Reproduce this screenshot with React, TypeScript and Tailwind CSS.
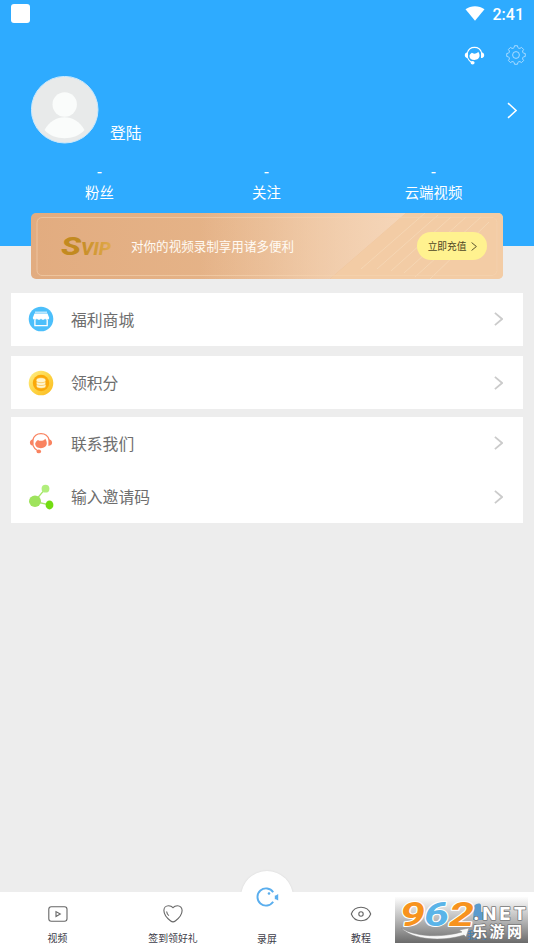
import { ReactNode } from "react";
import clsx from "clsx";

const STATS = ["粉丝", "关注", "云端视频"];

function Chevron({ className }: { className?: string }) {
  return (
    <svg
      viewBox="0 0 10 16"
      preserveAspectRatio="none"
      fill="none"
      stroke="currentColor"
      strokeWidth="2"
      className={className}
    >
      <path d="M1 1l8 7-8 7" />
    </svg>
  );
}

function HeadsetIcon({ className }: { className?: string }) {
  return (
    <svg viewBox="0 0 24 22" preserveAspectRatio="none" fill="none" className={className}>
      <path
        d="M3.800 8C5 3.800 8 1.600 12 1.600S19 3.800 20.200 8"
        stroke="currentColor"
        strokeWidth="1.200"
      />
      <path
        d="M4.600 7.200v6.800C2.400 13.900.9 12.700.9 10.600s1.500-3.300 3.700-3.400ZM19.400 7.200v6.800c2.200-.1 3.700-1.300 3.700-3.400s-1.500-3.300-3.700-3.400Z"
        fill="currentColor"
      />
      <path
        d="M6.200 11.600c.2-1.500 1.200-2.600 2.800-3.700 1.300 1.200 3.500 1.200 5.700.3.700-.3 1.200-.8 1.500-1.400.8.900 1.500 2.500 1.600 4.300 0 3.200-2.500 5.100-5.900 5.100s-5.700-1.600-5.700-4.600Z"
        fill="currentColor"
      />
      <path d="M4 13.500c.9 2.400 2.500 4.300 5 5.500" stroke="currentColor" strokeWidth="1.200" />
      <ellipse cx="9.800" cy="19.400" rx="2.300" ry="1.900" fill="currentColor" />
    </svg>
  );
}

function GearIcon({ className }: { className?: string }) {
  const teeth = Array.from({ length: 8 }, (_, i) => {
    const point = (r: number, deg: number) => {
      const a = ((i * 45 + deg - 90) * Math.PI) / 180;
      return `${(10 + r * Math.cos(a)).toFixed(2)} ${(10 + r * Math.sin(a)).toFixed(2)}`;
    };
    return `${point(7.7, -14)} L${point(9.4, -9)} L${point(9.4, 9)} L${point(7.7, 14)} L${point(7.3, 22.5)}`;
  });

  return (
    <svg
      viewBox="0 0 20 20"
      fill="none"
      stroke="currentColor"
      strokeWidth="0.9"
      strokeLinejoin="round"
      className={className}
    >
      <path d={`M${teeth.join(" L")} Z`} />
      <circle cx="10" cy="10" r="3.4" />
    </svg>
  );
}

function ShopIcon() {
  return (
    <svg viewBox="0 0 26 26" className="size-[26px]">
      <circle cx="13" cy="13" r="12.300" fill="#4cbffb" />
      <path d="M7 5.600h12v1.200H7z" fill="#d9f2ff" />
      <path
        d="M6.500 7.500h13l1.700 4.200c0 1.300-.9 2-2 2s-1.900-.6-2.100-1.300c-.3.800-1.100 1.300-2.100 1.300s-1.700-.5-2-1.300c-.3.800-1 1.300-2 1.300s-1.800-.5-2.100-1.300c-.2.700-1 1.300-2.100 1.300s-2-.7-2-2Z"
        fill="#fff"
      />
      <path d="M6.900 14v5.700h12.300V14" fill="none" stroke="#fff" strokeWidth="1.300" />
    </svg>
  );
}

function CoinIcon() {
  return (
    <svg viewBox="0 0 26 26" className="size-[26px]">
      <defs>
        <linearGradient id="coin" x1="0" y1="0" x2="1" y2="1">
          <stop offset="0" stopColor="#fff08a" />
          <stop offset="0.5" stopColor="#fdd545" />
          <stop offset="1" stopColor="#fcb91e" />
        </linearGradient>
      </defs>
      <circle cx="13" cy="13" r="12.300" fill="url(#coin)" />
      <circle cx="13" cy="13" r="8.200" fill="#fba808" />
      <g fill="#fff5cf" stroke="#f9b52c" strokeWidth="0.600">
        <ellipse cx="13.200" cy="15.800" rx="4.800" ry="2.500" />
        <ellipse cx="13" cy="13" rx="4.800" ry="2.500" />
        <ellipse cx="13" cy="10.200" rx="4.800" ry="2.500" />
      </g>
    </svg>
  );
}

function ShareIcon() {
  return (
    <svg viewBox="0 0 26 26" className="size-[26px]">
      <path d="M6.500 17.500l10.800-12.700M6.500 17.500l14.800 3.300" stroke="#a5e669" strokeWidth="1.300" />
      <ellipse cx="7" cy="17.300" rx="6" ry="5.700" fill="#9ee35c" />
      <circle cx="17.500" cy="4.700" r="3.900" fill="#b1ee7c" />
      <ellipse cx="21.500" cy="20.900" rx="3.900" ry="4.500" fill="#73dc12" />
    </svg>
  );
}

function MenuRow({ icon, label }: { icon: ReactNode; label: string }) {
  return (
    <div className="flex h-[53.300px] items-center pr-[20px] pl-[17px]">
      <span className="flex w-[26px] justify-center">{icon}</span>
      <span className="mt-px ml-[17px] flex-1 text-[15.800px] text-[#6e6e6e]">{label}</span>
      <Chevron className="h-[14px] w-[9px] text-[#cbcbcb]" />
    </div>
  );
}

function StatusBar() {
  return (
    <div className="flex h-7 items-center justify-between pr-[10px] pl-[10.500px]">
      <span className="mb-[1px] size-[19.500px] rounded-[3px] bg-white" />
      <div className="flex items-center gap-[8px]">
        <svg viewBox="0 0 20 16" className="mb-[2px] h-[16px] w-5" fill="#fff">
          <path d="M.5 4.200C6 .2 14 .2 19.500 4.200L10 15.700Z" />
        </svg>
        <span className="mt-[2px] font-[Roboto] text-[16px] font-medium text-white">2:41</span>
      </div>
    </div>
  );
}

function VipBanner() {
  return (
    <div className="relative z-10 mx-[31px] -mt-[33px] flex h-[66px] items-center overflow-hidden rounded-[5px] bg-linear-to-r from-[#e2ac80] via-[#e6b58a] to-[#f3ceab] pr-4 pl-[30px]">
      <svg viewBox="0 0 472 66" className="absolute inset-0 h-full w-full" fill="none">
        <defs>
          <linearGradient id="sheen" x1="0" y1="0" x2="1" y2="0">
            <stop offset="0.45" stopColor="#f5d5b8" stopOpacity="0" />
            <stop offset="1" stopColor="#f5d6b9" />
          </linearGradient>
        </defs>
        <path d="M0 0H375L299 66H0Z" fill="url(#sheen)" />
        <path d="M375 0H472V66H299Z" fill="#f3cca5" />
        <path
          d="M330 56L394 0M346 56L407 2M360 58L420 4M373 60L435 4M384 64L450 4M399 66L458 9"
          stroke="#f8dec0"
          strokeWidth="0.800"
          opacity="0.700"
        />
        <rect x="6" y="4.500" width="460" height="58" rx="5" stroke="#f5d3b1" strokeOpacity="0.600" />
      </svg>
      <svg viewBox="0 0 52 22" className="relative h-[22px] w-[52px] overflow-visible">
        <defs>
          <linearGradient id="gold" x1="0" y1="0" x2="1" y2="0">
            <stop offset="0" stopColor="#c58c26" />
            <stop offset="1" stopColor="#e2ab4c" />
          </linearGradient>
        </defs>
        <g fontFamily="Roboto, 'Liberation Sans', sans-serif" fontWeight="800" fontStyle="italic">
          <text x="0" y="20" fontSize="26.500" textLength="20" lengthAdjust="spacingAndGlyphs" fill="#c28a20">
            S
          </text>
          <text x="20" y="20" fontSize="18" textLength="30" lengthAdjust="spacingAndGlyphs" fill="url(#gold)">
            VIP
          </text>
        </g>
      </svg>
      <p className="relative ml-[18px] flex-1 text-[12.550px] whitespace-nowrap text-[#fffaf3]">
        对你的视频录制享用诸多便利
      </p>
      <button className="relative flex h-[28px] w-[70px] items-center justify-center gap-[5px] rounded-full bg-[#fff28f] pl-px text-[9.700px] text-[#4e4726]">
        立即充值
        <Chevron className="h-[9px] w-[6px] stroke-[1.600]" />
      </button>
    </div>
  );
}

function Tab({
  label,
  width,
  children,
}: {
  label: string;
  width: string;
  children?: ReactNode;
}) {
  return (
    <div className={clsx("flex flex-col items-center", width)}>
      <span className="mt-[12px] flex h-5 items-center justify-center">{children}</span>
      <span className="mt-[7px] text-[9.900px] leading-[15px] whitespace-nowrap text-[#3d3d49]">
        {label}
      </span>
    </div>
  );
}

// Site logo laid over the last tab
function SiteBadge() {
  return (
    <svg
      viewBox="0 0 133 46"
      className="absolute right-[6px] bottom-[6px] h-[46px] w-[133px] overflow-visible"
    >
      <defs>
        <linearGradient id="badge" x1="0" y1="0" x2="0" y2="1">
          <stop offset="0" stopColor="#fdfdfd" />
          <stop offset="0.500" stopColor="#b8b8b8" />
          <stop offset="1" stopColor="#6b6b6b" />
        </linearGradient>
      </defs>
      <rect width="133" height="46" fill="url(#badge)" />
      <path d="M79 9c3-3 6-3 7-1v7h4v8H78Z" fill="#5b9bcd" />
      <text x="72" y="42" fontSize="10" fill="#3c7fb9">
        我的
      </text>
      <g
        fontFamily="Roboto, 'Liberation Sans', sans-serif"
        fontWeight="700"
        fontStyle="italic"
        fontSize="34"
        stroke="#fff"
        strokeWidth="2"
        strokeLinejoin="round"
        paintOrder="stroke"
      >
        <text x="5" y="28.500" textLength="25" lengthAdjust="spacingAndGlyphs" fill="#f7931e">9</text>
        <text x="29" y="28.500" textLength="25" lengthAdjust="spacingAndGlyphs" fill="#5ab4e8">6</text>
        <text x="54" y="28.500" textLength="25" lengthAdjust="spacingAndGlyphs" fill="#f7931e">2</text>
      </g>
      <path
        d="M6 31c14 9 40 10 61 4l-3-2 10-2-3 9-2-2C47 45 18 43 6 31Z"
        fill="#f8f8f8"
        stroke="#888"
        strokeWidth="0.500"
      />
      <g fill="#fff" stroke="#777" strokeWidth="1.600" paintOrder="stroke" strokeLinejoin="round">
        <text
          x="78"
          y="22.500"
          fontFamily="Inter, 'Liberation Sans', sans-serif"
          fontWeight="800"
          fontSize="18"
          textLength="53"
        >
          .NET
        </text>
        <text x="77" y="40" fontSize="15" fontWeight="700" textLength="50">
          乐游网
        </text>
      </g>
    </svg>
  );
}

function TabBar() {
  return (
    <nav className="relative mt-auto flex h-[57px] bg-white">
      <span className="absolute -top-[21px] left-[241px] size-[52px] rounded-full bg-white shadow-[0_0_2px_rgba(0,0,0,0.1)]" />
      <span className="absolute top-0 left-[234px] h-[57px] w-[66px] bg-white" />
      <Tab label="视频" width="w-[115px]">
        <svg viewBox="0 0 20 16" className="h-4 w-5" fill="none" stroke="#666" strokeWidth="1.100">
          <rect x="0.800" y="0.800" width="18.200" height="14.400" rx="2.500" />
          <path d="M8 5.600v5l4.300-2.500Z" />
        </svg>
      </Tab>
      <Tab label="签到领好礼" width="w-[116px]">
        <svg viewBox="0 0 20 18" className="h-[18px] w-5" fill="none" stroke="#666" strokeWidth="1.100">
          <path d="M10 2.600C8.500 1 7 .8 5.500.8 2.700.8.900 2.800.900 5.500c0 4.100 3 7.600 6.800 10.500 1.600 1.300 3 1.300 4.600 0 3.800-2.900 6.800-6.400 6.800-10.500C19.100 2.800 17.300.8 14.500.8 13 .8 11.500 1 10 2.600Z" />
          <path d="M3.600 6.500c.2 1.700 1 3 2.300 4.200" />
        </svg>
      </Tab>
      <div className="relative flex w-[72px] flex-col items-center">
        <svg viewBox="0 0 24 22" className="-mt-[6px] h-[22px] w-6" fill="none">
          <path d="M18.200 6.200A8.600 8.600 0 1 0 18.200 15.800" stroke="#5aaeee" strokeWidth="1.900" />
          <circle cx="14" cy="7.500" r="1.300" fill="#5aaeee" />
          <path d="M19.800 9.400h1l2.400-1.400v6.400l-2.400-1.100h-1Z" fill="#5aaeee" />
        </svg>
        <span className="mt-[24px] text-[9.900px] leading-[15px] text-[#3d3d49]">录屏</span>
      </div>
      <Tab label="教程" width="w-[116px]">
        <svg viewBox="0 0 22 16" className="h-4 w-[22px]" fill="none" stroke="#666" strokeWidth="1.100">
          <path d="M1.300 8C2.800 4 6.300 1.300 11 1.300S19.200 4 20.700 8c-1.500 4-5 6.700-9.700 6.700S2.800 12 1.300 8Z" />
          <circle cx="11" cy="8" r="2.200" />
        </svg>
      </Tab>
      <SiteBadge />
    </nav>
  );
}

export default function App() {
  return (
    <div className="flex h-[949px] w-[534px] flex-col overflow-hidden bg-[#ededed] font-['Noto_Sans_CJK_SC','Noto_Sans',sans-serif]">
      <header className="h-[246px] shrink-0 bg-[#2eabff] text-white">
        <StatusBar />
        <div className="flex h-[48px] items-center justify-end gap-[21px] pt-[6px] pr-[8px]">
          <HeadsetIcon className="h-[19px] w-[21px]" />
          <GearIcon className="size-5 text-[#b5e0ff]" />
        </div>
        <div className="flex h-[68px] pl-[31px]">
          <svg viewBox="0 0 68 68" className="size-[68px]">
            <circle cx="33.700" cy="33.700" r="33.300" fill="#e8eaea" stroke="#c9e8fd" />
            <circle cx="33.700" cy="28.500" r="12.200" fill="#fafcfb" />
            <path d="M13.500 54C22.500 37 44.500 37 53.500 54c-9 11-31 11-40 0Z" fill="#fafcfb" />
          </svg>
          <span className="mt-[45px] ml-[11px] flex-1 text-[15.800px] leading-6">登陆</span>
          <Chevron className="mt-[26px] mr-[17px] h-[17px] w-[10px] stroke-[1.500]" />
        </div>
        <div className="flex pt-[19px]">
          {STATS.map((stat) => (
            <div
              key={stat}
              className="flex w-[167px] shrink-0 flex-col items-center first:ml-[16px]"
            >
              <span className="text-[15px] leading-[16px] font-medium">-</span>
              <span className="mt-[1px] text-[14.400px] leading-[24px]">{stat}</span>
            </div>
          ))}
        </div>
      </header>

      <VipBanner />

      <main className="mx-[11px] mt-[13.700px]">
        <section className="bg-white">
          <MenuRow icon={<ShopIcon />} label="福利商城" />
        </section>
        <section className="mt-[10px] bg-white">
          <MenuRow icon={<CoinIcon />} label="领积分" />
        </section>
        <section className="mt-[7.500px] bg-white">
          <MenuRow
            icon={<HeadsetIcon className="h-[22px] w-[24px] text-[#f98360]" />}
            label="联系我们"
          />
          <MenuRow icon={<ShareIcon />} label="输入邀请码" />
        </section>
      </main>

      <TabBar />
    </div>
  );
}
